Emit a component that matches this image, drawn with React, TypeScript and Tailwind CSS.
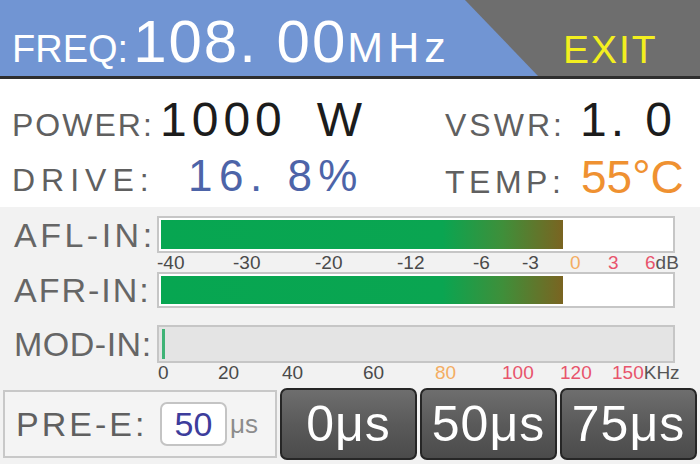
import React from "react";

type Tick = { label: string; x: number; color?: string; unit?: string };

const ORANGE = "#f4ad62";
const PINK = "#e8546c";

// scale ticks, x in px from the left edge of the screen
const DB_TICKS: Tick[] = [
  { label: "-40", x: 157 },
  { label: "-30", x: 233 },
  { label: "-20", x: 315 },
  { label: "-12", x: 397 },
  { label: "-6", x: 473 },
  { label: "-3", x: 522 },
  { label: "0", x: 570, color: ORANGE },
  { label: "3", x: 608, color: PINK },
  { label: "6", x: 645, color: PINK, unit: "dB" },
];

const KHZ_TICKS: Tick[] = [
  { label: "0", x: 158 },
  { label: "20", x: 218 },
  { label: "40", x: 282 },
  { label: "60", x: 363 },
  { label: "80", x: 435, color: ORANGE },
  { label: "100", x: 502, color: PINK },
  { label: "120", x: 560, color: PINK },
  { label: "150", x: 612, color: PINK, unit: "KHz" },
];

function Scale({ ticks }: { ticks: Tick[] }) {
  return (
    <div className="relative h-[19px] text-[19px] leading-none text-[#4a4a4a]">
      {ticks.map((t) => (
        <span key={t.label} className="absolute top-0" style={{ left: t.x, color: t.color }}>
          {t.label}
          {t.unit && <span className="text-[#555]">{t.unit}</span>}
        </span>
      ))}
    </div>
  );
}

function LevelBar({ label, level, track, h }: { label: string; level: number; track: string; h: string }) {
  return (
    <div className={`flex items-center ${h}`}>
      <div className={`w-[157px] pl-[14px] text-[34px] leading-none text-[#666] ${track}`}>{label}</div>
      <div className="h-full w-[518px] border-2 border-[#c6c6c6] bg-white p-[2px]">
        <div
          className="h-full bg-[linear-gradient(90deg,#07a651_0%,#0aa551_70%,#3f8f3a_85%,#7a6421_100%)]"
          style={{ width: `${level}%` }}
        />
      </div>
    </div>
  );
}

export default function App() {
  const afl = 78.9;
  const afr = 78.9;

  return (
    <div className="flex h-[464px] w-[700px] flex-col overflow-hidden bg-[#f2f2f2] font-['Liberation_Sans',Arial,sans-serif]">
      {/* frequency header */}
      <div className="flex h-[79px] shrink-0 border-b-[3px] border-[#2e2e2e] bg-[#7195d3]">
        <div className="flex flex-1 items-baseline pl-[12px] pt-[12px] leading-none text-white">
          <span className="text-[38px]">FREQ:</span>
          <span className="ml-[5px] text-[60px] tracking-[2px]">108. 00</span>
          <span className="text-[43px] tracking-[5px]">MHz</span>
        </div>
        <div className="flex w-[235px] items-baseline bg-[#6e6e6e] pl-[98px] pt-[30px] leading-none [clip-path:polygon(0_0,100%_0,100%_100%,73px_100%)]">
          <span className="text-[39px] tracking-[2px] text-[#f3ef1f]">EXIT</span>
        </div>
      </div>

      {/* readouts */}
      <div className="h-[128px] shrink-0 bg-white pl-[12px] pt-[17px] leading-none">
        <div className="flex">
          <div className="flex w-[433px] items-baseline">
            <span className="w-[148px] text-[32px] tracking-[2px] text-[#606060]">POWER:</span>
            <span className="text-[48px] tracking-[5px] text-[#1c1c1c]">1000</span>
            <span className="ml-[30px] text-[48px] text-[#1c1c1c]">W</span>
          </div>
          <div className="flex items-baseline">
            <span className="w-[135px] text-[32px] tracking-[3px] text-[#606060]">VSWR:</span>
            <span className="text-[48px] tracking-[4px] text-[#1c1c1c]">1. 0</span>
          </div>
        </div>
        <div className="mt-[10px] flex">
          <div className="flex w-[433px] items-baseline">
            <span className="w-[176px] text-[32px] tracking-[6px] text-[#606060]">DRIVE:</span>
            <span className="text-[44px] tracking-[6.5px] text-[#4d64a8]">16. 8%</span>
          </div>
          <div className="flex items-baseline">
            <span className="w-[136px] text-[32px] tracking-[4.5px] text-[#606060]">TEMP:</span>
            <span className="text-[46px] text-[#ef9131]">55°C</span>
          </div>
        </div>
      </div>

      {/* audio level meters */}
      <div className="pt-[9px]">
        <LevelBar label="AFL-IN:" level={afl} track="tracking-[3.5px]" h="h-[37px]" />
        <Scale ticks={DB_TICKS} />
        <LevelBar label="AFR-IN:" level={afr} track="tracking-[2px]" h="h-[36px]" />
        <div className="mt-[17px] flex h-[38px] items-center">
          <div className="w-[157px] pl-[14px] text-[34px] leading-none tracking-[0.5px] text-[#666]">MOD-IN:</div>
          <div className="h-full w-[518px] border-2 border-[#c6c6c6] bg-[#e4e4e4] px-[3px] py-[2px]">
            <div className="h-full w-[3px] bg-[#3fb376]" />
          </div>
        </div>
        <Scale ticks={KHZ_TICKS} />
      </div>

      {/* pre-emphasis */}
      <div className="mt-[6px] flex h-[72px] items-center gap-[3px] pl-[3px]">
        <div className="flex h-[68px] w-[274px] items-center border-2 border-[#c8c8c8] bg-[#f4f4f4] pl-[11px] leading-none">
          <span className="w-[144px] text-[34px] tracking-[3px] text-[#606060]">PRE-E:</span>
          <span className="flex h-[44px] w-[67px] items-center justify-center rounded-[7px] border-2 border-[#c4c4c4] bg-white text-[34px] text-[#3d3d9c]">
            50
          </span>
          <span className="ml-[3px] text-[26px] text-[#8c8c8c]">μs</span>
        </div>
        {["0μs", "50μs", "75μs"].map((b) => (
          <button
            key={b}
            className="flex h-[72px] w-[137px] items-center justify-center rounded-[7px] border-2 border-[#262626] bg-[linear-gradient(180deg,#6e6e6e_0%,#5a5a5a_50%,#4b4b4b_100%)] text-[50px] leading-none tracking-[1px] text-white"
          >
            {b}
          </button>
        ))}
      </div>
    </div>
  );
}
